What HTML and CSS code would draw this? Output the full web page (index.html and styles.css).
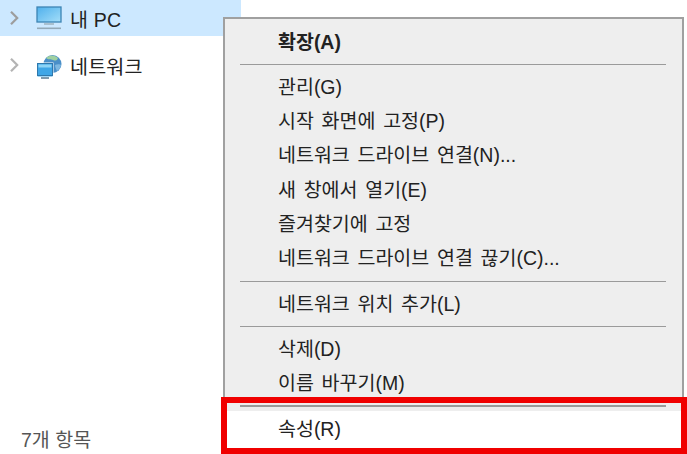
FILE: index.html
```html
<!DOCTYPE html>
<html lang="ko">
<head>
  <meta charset="UTF-8">
  <link rel="stylesheet" href="styles.css">
  <title>내 PC</title>
</head>
<body>
  <div class="explorer">
    <div class="tree">
      <div class="tree-row selected">
        <svg class="chevron" width="10" height="14" viewBox="0 0 10 14"><path d="M2 .8l6.2 6.2L2 13.2" fill="none" stroke="#9d9d9d" stroke-width="2.2"/></svg>
        <svg class="tree-icon" width="26" height="24" viewBox="0 0 26 24">
          <defs>
            <linearGradient id="screen" x1="0" y1="0" x2="1" y2="1">
              <stop offset="0" stop-color="#4fb0ec"/>
              <stop offset="1" stop-color="#a4def9"/>
            </linearGradient>
          </defs>
          <rect x="1" y="1" width="24" height="15" fill="url(#screen)" stroke="#3d84b4" stroke-width="1.3"/>
          <rect x="8" y="17" width="10" height="2" fill="#a9c0cf"/>
          <rect x="1" y="21.5" width="24" height="1.6" fill="#93a9b8"/>
        </svg>
        <span class="tree-label">내 PC</span>
      </div>
      <div class="tree-row">
        <svg class="chevron" width="10" height="14" viewBox="0 0 10 14"><path d="M2 .8l6.2 6.2L2 13.2" fill="none" stroke="#b4b4b4" stroke-width="2.2"/></svg>
        <svg class="tree-icon net" width="26" height="26" viewBox="0 0 26 26">
          <circle cx="16.5" cy="10" r="9" fill="#4a8fc8"/>
          <path d="M10 4c3-3.500 9-3.500 12 0-1 3-3 3-5 2-2-1-5 0-7-2z" fill="#9fd0a0"/>
          <path d="M19 11c2-1 5-1 6 0-.5 3-2 5-4 6-1-2-2-4-2-6z" fill="#7fb8e0"/>
          <rect x="1" y="9" width="16" height="14" fill="#46aeea" stroke="#fff" stroke-width="1"/>
          <rect x="1.500" y="9.500" width="15" height="12" fill="#3fa6e6" stroke="#2e78ac" stroke-width="1"/>
          <rect x="2.500" y="10.500" width="13" height="3" fill="#8ed4f6"/>
          <rect x="5" y="23" width="8" height="2" fill="#7f9aad"/>
        </svg>
        <span class="tree-label">네트워크</span>
      </div>
    </div>
    <div class="status">7개 항목</div>
  </div>

  <div class="menu">
    <div class="menu-item bold">확장(A)</div>
    <div class="menu-sep"></div>
    <div class="menu-item">관리(G)</div>
    <div class="menu-item">시작 화면에 고정(P)</div>
    <div class="menu-item">네트워크 드라이브 연결(N)...</div>
    <div class="menu-item">새 창에서 열기(E)</div>
    <div class="menu-item">즐겨찾기에 고정</div>
    <div class="menu-item">네트워크 드라이브 연결 끊기(C)...</div>
    <div class="menu-sep"></div>
    <div class="menu-item">네트워크 위치 추가(L)</div>
    <div class="menu-sep"></div>
    <div class="menu-item">삭제(D)</div>
    <div class="menu-item">이름 바꾸기(M)</div>
    <div class="menu-sep"></div>
    <div class="menu-item active">속성(R)</div>
  </div>

  <div class="highlight"></div>
</body>
</html>
```

FILE: styles.css
```css
html, body {
  margin: 0;
  padding: 0;
  height: 100%;
  overflow: hidden;
}

body {
  background-color: #fff;
  color: #222;
  font-family: "Liberation Sans", "Noto Sans CJK KR", sans-serif;
  font-size: 19.5px;
  position: relative;
}

.explorer {
  height: 454px;
  width: 241px;
  display: flex;
  flex-direction: column;
  justify-content: space-between;
}

.tree-row {
  display: flex;
  align-items: center;
  height: 36px;
  padding-left: 9px;
  margin-bottom: 11px;
}

.tree-row.selected {
  background-color: #cce8ff;
}

.chevron {
  margin-right: 17px;
}

.tree-icon {
  margin-right: 8px;
}

.tree-icon.net {
  margin-top: 4px;
}

.tree-label {
  letter-spacing: 0.2px;
}

.status {
  padding: 0 0 1px 21px;
  color: #555;
}

.menu {
  position: absolute;
  left: 223px;
  top: 17px;
  width: 457px;
  height: 434.5px;
  overflow: hidden;
  background-color: #eeeeee;
  border: 2px solid #a0a0a0;
  border-bottom: none;
  padding-top: 5.5px;
  word-spacing: 2.3px;
}

.menu-item {
  height: 34.3px;
  line-height: 34px;
  padding-left: 53px;
  white-space: nowrap;
}

.menu-item.bold {
  font-weight: 700;
}

.menu-item.active {
  background-color: #fff;
  height: 42px;
  line-height: 36px;
}

.menu-sep {
  height: 1.5px;
  background-color: #9a9a9a;
  margin: 5px 16px 4.5px 15px;
}

.highlight {
  position: absolute;
  left: 221px;
  top: 397px;
  width: 466px;
  height: 57px;
  box-sizing: border-box;
  border: 6px solid #f00000;
}
```
